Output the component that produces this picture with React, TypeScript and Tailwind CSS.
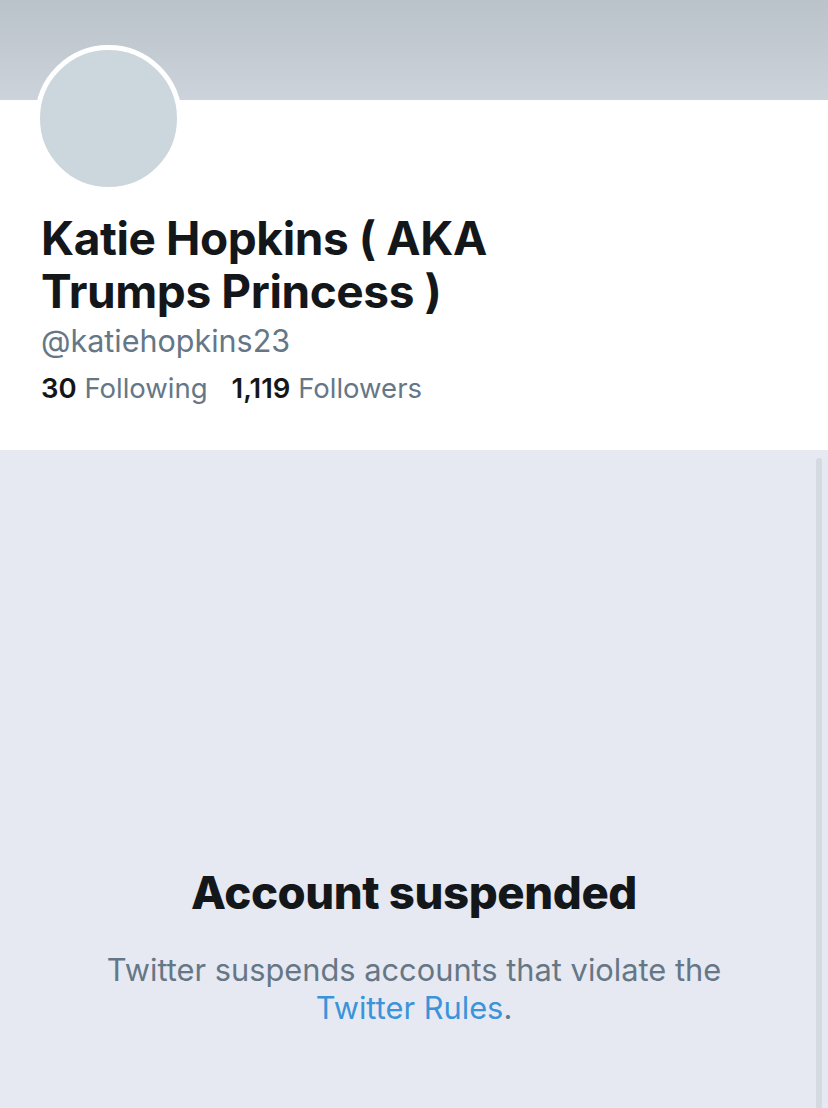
export default function App() {
  return (
    <div
      className="w-[828px] h-[1108px] overflow-hidden bg-white flex flex-col"
      style={{ fontFamily: 'Inter, "Noto Sans", sans-serif' }}
    >
      <div className="h-[100px] shrink-0 bg-gradient-to-b from-[#bac2ca] to-[#ccd3da]" />

      <section className="bg-white px-[35px] pb-[46px]">
        <div className="-mt-[55px] h-[147px] w-[147px] rounded-full border-[5px] border-white bg-[#ccd6dd]" />
        <div className="pl-[6px]">
          <h1 className="mt-[20px] text-[46px] font-bold leading-[53px] tracking-[-0.4px] text-[#14171a]">
            Katie Hopkins ( AKA
            <br />
            Trumps Princess )
          </h1>
          <div className="mt-[4px] text-[30.5px] leading-[38px] text-[#657786]">@katiehopkins23</div>
          <div className="mt-[12px] flex gap-[24px] text-[27.5px] leading-[32px]">
            <span>
              <span className="font-semibold text-[#14171a]">30</span>
              <span className="text-[#657786]"> Following</span>
            </span>
            <span>
              <span className="font-semibold text-[#14171a]">1,119</span>
              <span className="text-[#657786]"> Followers</span>
            </span>
          </div>
        </div>
      </section>

      <section className="relative flex-1 bg-[#e6e9f1] pt-[418px] text-center">
        <h2 className="text-[45.5px] font-extrabold leading-[50px] tracking-[-0.4px] text-[#14171a]">
          Account suspended
        </h2>
        <p className="mx-auto mt-[33px] w-[700px] text-[30.8px] leading-[38px] text-[#657786]">
          Twitter suspends accounts that violate the
          <br />
          <span className="text-[#3b94d9]">Twitter Rules</span>.
        </p>
        <div className="absolute right-[6px] top-[8px] bottom-0 w-[6px] rounded-t-full bg-[#d5d9e2]" />
      </section>
    </div>
  );
}
